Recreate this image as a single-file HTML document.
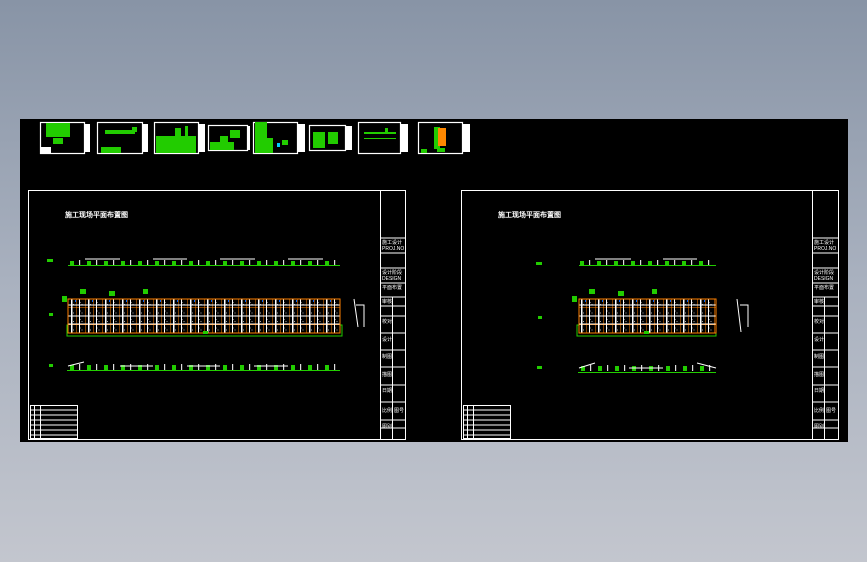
<!DOCTYPE html>
<html><head><meta charset="utf-8"><style>
html,body{margin:0;padding:0;width:867px;height:562px;overflow:hidden;background:linear-gradient(#8894a6,#a9b1bf 50%,#c3c6ce);font-family:"Liberation Sans",sans-serif}
svg{position:absolute;left:0;top:0}
</style></head><body>
<svg width="867" height="562" viewBox="0 0 867 562">
<defs>
<pattern id="og" x="68" y="299" width="8.5" height="8.5" patternUnits="userSpaceOnUse">
<rect width="8.5" height="8.5" fill="#000"/>
<path d="M0 0V8.5M0 0H8.5" stroke="#ff8000" stroke-width="1"/>
<rect x="3" y="3" width="1" height="1" fill="#ccc"/><rect x="5" y="5" width="1" height="1" fill="#aaa"/>
</pattern>
<pattern id="wp" x="68" y="299" width="17" height="40" patternUnits="userSpaceOnUse">
<rect x="3" y="0" width="1.5" height="34" fill="#fff"/>
<rect x="11" y="0" width="1" height="34" fill="#fff"/>
<rect x="7" y="1" width="1" height="2" fill="#06f"/>
</pattern>
<pattern id="gb" x="68" y="258" width="17" height="10" patternUnits="userSpaceOnUse">
<rect x="2" y="3" width="4" height="5" fill="#22cc00"/>
<rect x="11" y="2" width="1.2" height="6" fill="#ddd"/>
</pattern>
<pattern id="gb2" x="68" y="362" width="17" height="10" patternUnits="userSpaceOnUse">
<rect x="2" y="3" width="4" height="5" fill="#22cc00"/>
<rect x="11" y="2" width="1.2" height="6" fill="#ddd"/>
</pattern>
<pattern id="gb3" x="579" y="363" width="17" height="10" patternUnits="userSpaceOnUse">
<rect x="2" y="3" width="4" height="5" fill="#22cc00"/>
<rect x="11" y="2" width="1.2" height="6" fill="#ddd"/>
</pattern>
</defs>
<rect x="20" y="119" width="828" height="323" fill="#000"/>

<g fill="none" stroke="#fff" stroke-width="1.2">
<rect x="40.5" y="122.5" width="44" height="31"/>
<rect x="97.5" y="122.5" width="45" height="31"/>
<rect x="154.5" y="122.5" width="44" height="31"/>
<rect x="208.5" y="125.5" width="39" height="25"/>
<rect x="253.5" y="122.5" width="44" height="31"/>
<rect x="309.5" y="125.5" width="36" height="25"/>
<rect x="358.5" y="122.5" width="42" height="31"/>
<rect x="418.5" y="122.5" width="44" height="31"/>
</g>
<g fill="#fff">
<rect x="84" y="124" width="6" height="28"/><rect x="142" y="124" width="6" height="28"/><rect x="198" y="124" width="7" height="28"/>
<rect x="247" y="126" width="3" height="24"/><rect x="297" y="124" width="8" height="28"/><rect x="345" y="126" width="7" height="24"/>
<rect x="400" y="124" width="8" height="28"/><rect x="462" y="124" width="8" height="28"/>
<rect x="41" y="147" width="10" height="6"/>
</g>
<g fill="#2c0">
<rect x="46" y="123" width="24" height="14"/><rect x="53" y="138" width="10" height="6"/>
<rect x="101" y="147" width="20" height="6"/><rect x="105" y="130" width="30" height="4"/><rect x="132" y="127" width="5" height="5"/>
<rect x="156" y="136" width="40" height="17"/><rect x="175" y="128" width="6" height="10"/><rect x="185" y="126" width="3" height="14"/>
<rect x="210" y="142" width="24" height="8"/><rect x="220" y="136" width="8" height="6"/><rect x="230" y="130" width="10" height="8"/>
<rect x="255" y="122" width="12" height="16"/><rect x="255" y="138" width="18" height="15"/><rect x="282" y="140" width="6" height="5"/>
<rect x="313" y="132" width="12" height="16"/><rect x="328" y="132" width="10" height="12"/>
<rect x="364" y="132" width="32" height="2"/><rect x="364" y="138" width="32" height="1"/><rect x="385" y="128" width="3" height="4"/>
<rect x="421" y="149" width="6" height="4"/><rect x="434" y="127" width="6" height="22"/><rect x="437" y="148" width="8" height="4"/>
</g>
<rect x="438" y="128" width="8" height="18" fill="#f80"/>
<rect x="277" y="143" width="3" height="4" fill="#0cf"/>

<g stroke="#fff" fill="none" stroke-width="1">
<rect x="28.5" y="190.5" width="377" height="249"/>
<path d="M380.5 190V439M380.5 238H405M380.5 253H405M380.5 268H405M380.5 283H405M380.5 297H405M392.5 297V439M380.5 306H405M380.5 316H405M380.5 333H405M380.5 350H405M380.5 367H405M380.5 385H405M380.5 402H405M380.5 420H405M380.5 428H405"/>
<rect x="30.5" y="405.5" width="47" height="33"/>
<path d="M30 410H77M30 415H77M30 420H77M30 425H77M30 430H77M30 435H77M34.5 405V439M40.5 405V439"/>
</g>
<text x="65" y="217" font-size="7" font-weight="bold" fill="#fff">施工现场平面布置图</text>
<rect x="68" y="258" width="272" height="8" fill="url(#gb)"/>
<rect x="68" y="265" width="272" height="1" fill="#2c0"/>
<path d="M85 259H120M153 259H187M220 259H255M288 259H323" stroke="#fff" stroke-width="1"/>
<rect x="67" y="325" width="275" height="11" fill="none" stroke="#2c0" stroke-width="1"/>
<rect x="68" y="299" width="272" height="34" fill="url(#og)"/>
<rect x="68" y="299" width="272" height="34" fill="url(#wp)"/>
<path d="M68 305H340M68 316H340M68 324H340" stroke="#fff" stroke-width="1"/>
<rect x="68" y="299" width="272" height="34" fill="none" stroke="#ff8000"/>
<rect x="62" y="296" width="5" height="6" fill="#2c0"/><rect x="80" y="289" width="6" height="5" fill="#2c0"/><rect x="109" y="291" width="6" height="5" fill="#2c0"/><rect x="143" y="289" width="5" height="5" fill="#2c0"/>
<rect x="203" y="331" width="5" height="3" fill="#2c0"/>
<rect x="68" y="362" width="272" height="9" fill="url(#gb2)"/>
<rect x="67" y="370" width="273" height="1" fill="#2c0"/>
<path d="M120 366H153M187 366H220M254 366H288M68 366L84 362" stroke="#fff"/>
<path d="M354 299L358 327M356 305H364V327" stroke="#fff" fill="none"/>
<rect x="47" y="259" width="6" height="3" fill="#2c0"/><rect x="49" y="313" width="4" height="3" fill="#2c0"/><rect x="49" y="364" width="4" height="3" fill="#2c0"/>

<g stroke="#fff" fill="none" stroke-width="1">
<rect x="461.5" y="190.5" width="377" height="249"/>
<path d="M812.5 190V439M812.5 238H838M812.5 253H838M812.5 268H838M812.5 283H838M812.5 297H838M824.5 297V439M812.5 306H838M812.5 316H838M812.5 333H838M812.5 350H838M812.5 367H838M812.5 385H838M812.5 402H838M812.5 420H838M812.5 428H838"/>
<rect x="463.5" y="405.5" width="47" height="33"/>
<path d="M463 410H510M463 415H510M463 420H510M463 425H510M463 430H510M463 435H510M467.5 405V439M473.5 405V439"/>
</g>
<text x="498" y="217" font-size="7" font-weight="bold" fill="#fff">施工现场平面布置图</text>
<rect x="579" y="258" width="137" height="8" fill="url(#gb)"/>
<rect x="579" y="265" width="137" height="1" fill="#2c0"/>
<path d="M595 259H631M663 259H697" stroke="#fff"/>
<rect x="577" y="325" width="139" height="11" fill="none" stroke="#2c0"/>
<rect x="579" y="299" width="137" height="34" fill="url(#og)"/>
<rect x="579" y="299" width="137" height="34" fill="url(#wp)"/>
<path d="M579 305H716M579 316H716M579 324H716" stroke="#fff"/>
<rect x="579" y="299" width="137" height="34" fill="none" stroke="#ff8000"/>
<rect x="572" y="296" width="5" height="6" fill="#2c0"/><rect x="589" y="289" width="6" height="5" fill="#2c0"/><rect x="618" y="291" width="6" height="5" fill="#2c0"/><rect x="652" y="289" width="5" height="5" fill="#2c0"/>
<rect x="644" y="331" width="5" height="3" fill="#2c0"/>
<rect x="579" y="363" width="137" height="9" fill="url(#gb3)"/>
<rect x="578" y="372" width="138" height="1" fill="#2c0"/>
<path d="M629 368H663M579 368L595 363M697 363L716 368" stroke="#fff"/>
<path d="M737 299L741 332M740 305H748V327" stroke="#fff" fill="none"/>
<rect x="536" y="262" width="6" height="3" fill="#2c0"/><rect x="538" y="316" width="4" height="3" fill="#2c0"/><rect x="537" y="366" width="5" height="3" fill="#2c0"/>

<g fill="#fff" font-size="5">
<text x="382" y="244">施工设计</text><text x="382" y="250">PROJ.NO</text>
<text x="382" y="274">设计阶段</text><text x="382" y="280">DESIGN</text>
<text x="382" y="289">平面布置</text>
<text x="382" y="303">审核</text><text x="382" y="323">校对</text><text x="382" y="341">设计</text><text x="382" y="358">制图</text><text x="382" y="376">描图</text><text x="382" y="392">日期</text><text x="382" y="412">比例</text><text x="394" y="412">图号</text><text x="382" y="428">图别</text>
<text x="814" y="244">施工设计</text><text x="814" y="250">PROJ.NO</text>
<text x="814" y="274">设计阶段</text><text x="814" y="280">DESIGN</text>
<text x="814" y="289">平面布置</text>
<text x="814" y="303">审核</text><text x="814" y="323">校对</text><text x="814" y="341">设计</text><text x="814" y="358">制图</text><text x="814" y="376">描图</text><text x="814" y="392">日期</text><text x="814" y="412">比例</text><text x="826" y="412">图号</text><text x="814" y="428">图别</text>
</g>
</svg>
</body></html>
